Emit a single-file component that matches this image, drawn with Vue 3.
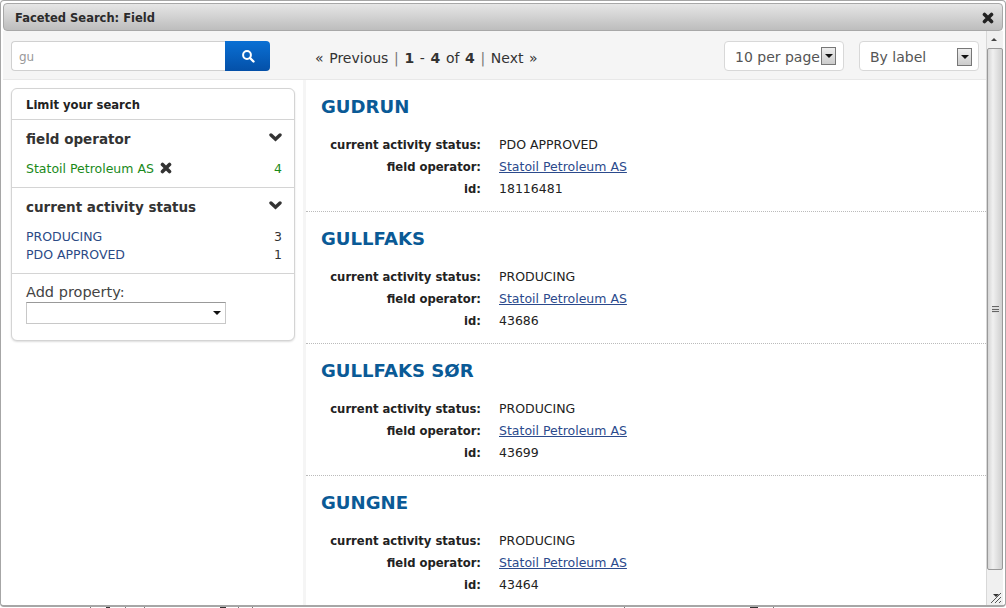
<script setup>
const results = [
  { name: 'GUDRUN', status: 'PDO APPROVED', id: '18116481' },
  { name: 'GULLFAKS', status: 'PRODUCING', id: '43686' },
  { name: 'GULLFAKS SØR', status: 'PRODUCING', id: '43699' },
  { name: 'GUNGNE', status: 'PRODUCING', id: '43464' },
]
</script>

<template>
  <div class="page">
    <div class="win">
      <header class="title">
        <span>Faceted Search: Field</span>
        <svg class="x" width="12" height="12" viewBox="0 0 12 12"><path d="M2.500 2.500l7 7M9.500 2.500l-7 7" fill="none" stroke="#222" stroke-width="3.600" stroke-linecap="round"/></svg>
      </header>
      <div class="body">
        <div class="main">
          <div class="toolbar">
            <div class="search">
              <div class="input">gu</div>
              <button class="go">
                <svg width="14" height="14" viewBox="0 0 14 14"><circle cx="6" cy="6" r="3.900" fill="none" stroke="#fff" stroke-width="2"/><path d="M9 9l3.500 3.500" stroke="#fff" stroke-width="2.400" stroke-linecap="round"/></svg>
              </button>
            </div>
            <div class="pager">« Previous <i>|</i> <b>1</b> - <b>4</b> of <b>4</b> <i>|</i> Next »</div>
            <div class="sel first"><span>10 per page</span><em class="arrow"></em></div>
            <div class="sel"><span>By label</span><em class="arrow"></em></div>
          </div>
          <div class="columns">
            <aside class="side">
              <div class="card">
                <div class="limit">Limit your search</div>
                <section class="facet one">
                  <div class="fhead"><span>field operator</span><svg width="13" height="9" viewBox="0 0 13 9"><path d="M2 2 6.500 6.200 11 2" fill="none" stroke="#333" stroke-width="3.400" stroke-linecap="round"/></svg></div>
                  <div class="row green"><span>Statoil Petroleum AS <svg class="rm" width="12" height="12" viewBox="0 0 12 12"><path d="M2.500 2.500l7 7M9.500 2.500l-7 7" fill="none" stroke="#333" stroke-width="3.600" stroke-linecap="round"/></svg></span><span>4</span></div>
                </section>
                <section class="facet two">
                  <div class="fhead"><span>current activity status</span><svg width="13" height="9" viewBox="0 0 13 9"><path d="M2 2 6.500 6.200 11 2" fill="none" stroke="#333" stroke-width="3.400" stroke-linecap="round"/></svg></div>
                  <div class="row"><span class="link">PRODUCING</span><span>3</span></div>
                  <div class="row"><span class="link">PDO APPROVED</span><span>1</span></div>
                </section>
                <section class="add">
                  <div class="addlabel">Add property:</div>
                  <div class="addsel"><em></em></div>
                </section>
              </div>
            </aside>
            <main class="results">
              <article v-for="r in results" :key="r.name" class="res">
                <h2>{{ r.name }}</h2>
                <dl>
                  <dt>current activity status:</dt><dd>{{ r.status }}</dd>
                  <dt>field operator:</dt><dd><a>Statoil Petroleum AS</a></dd>
                  <dt>id:</dt><dd>{{ r.id }}</dd>
                </dl>
              </article>
            </main>
          </div>
        </div>
        <div class="scroll">
          <div class="up"></div>
          <div class="thumb"><div class="grip"></div></div>
          <div class="resize">
            <svg width="12" height="12" viewBox="0 0 12 12"><path d="M1 11 11 1M5 11l6-6M9 11l2-2" stroke="#555" stroke-width="1" fill="none"/><path d="M3 2h6l-3 3z" fill="#333"/></svg>
          </div>
        </div>
      </div>
    </div>
    <div class="under"></div>
  </div>
</template>

<style>
html, body { margin: 0; background: #fff; overflow: hidden; }
</style>

<style scoped>
.page { width: 1006px; height: 608px; overflow: hidden; font-family: "DejaVu Sans", Verdana, sans-serif; font-size: 12.500px; color: #222; }
.win { box-sizing: border-box; width: 1006px; height: 607px; border: 1px solid #a6a6a6; border-bottom-width: 2px; border-radius: 4px; padding: 2px 2px 0; background: #fff; display: flex; flex-direction: column; }
.under {
  height: 1px;
  background-color: #fff;
  background-repeat: no-repeat;
  background-image: linear-gradient(#777, #777), linear-gradient(#333, #333), linear-gradient(#777, #777), linear-gradient(#777, #777), linear-gradient(#333, #333), linear-gradient(#777, #777), linear-gradient(#777, #777), linear-gradient(#777, #777), linear-gradient(#333, #333), linear-gradient(#777, #777);
  background-size: 1px 1px, 4px 1px, 1px 1px, 1px 1px, 6px 1px, 1px 1px, 1px 1px, 1px 1px, 8px 1px, 1px 1px;
  background-position: 90px 0, 106px 0, 125px 0, 144px 0, 220px 0, 238px 0, 252px 0, 624px 0, 750px 0, 773px 0;
}
.title { height: 28px; flex: none; box-sizing: border-box; border: 1px solid #a8a8a8; border-radius: 4px; background: linear-gradient(#e6e6e6, #bdbdbd); display: flex; align-items: center; justify-content: space-between; padding: 1px 8px 0 11px; font-size: 11.500px; font-weight: bold; color: #2b2b2b; }
.x { display: block; }
.body { flex: 1; min-height: 0; display: flex; }
.main { flex: 1; min-width: 0; display: flex; flex-direction: column; }
.toolbar { height: 49px; flex: none; box-sizing: border-box; background: #f5f5f5; border-bottom: 1px solid #e8e8e8; display: flex; align-items: flex-start; padding: 10px 7px 0 8px; }
.search { display: flex; width: 259px; height: 30px; flex: none; }
.input { flex: 1; box-sizing: border-box; background: #fff; border: 1px solid #d0d0d0; border-right: 0; border-radius: 4px 0 0 4px; padding: 1px 0 0 7px; line-height: 29px; color: #999; font-size: 12px; }
.go { width: 45px; border: 0; padding: 0; background: linear-gradient(#0a70d4, #0450a8); border-radius: 0 4px 4px 0; display: flex; align-items: center; justify-content: center; }
.pager { margin-left: 45px; line-height: 35px; font-size: 14px; word-spacing: 1.200px; color: #333; flex: 1; white-space: nowrap; }
.pager i { font-style: normal; color: #777; }
.pager b { color: #333; }
.sel { box-sizing: border-box; width: 120px; height: 30px; background: #fff; border: 1px solid #d8d8d8; border-radius: 4px; display: flex; align-items: center; justify-content: space-between; padding: 1px 6px 0 10px; font-size: 14px; color: #555; margin-left: 15px; flex: none; position: relative; }
.sel.first { margin-left: 0; }
.arrow { width: 15px; height: 18px; box-sizing: border-box; border: 1px solid #777; background: linear-gradient(#eee, #ccc); position: relative; display: block; }
.arrow::after { content: ""; position: absolute; left: 3px; top: 6px; border: 4px solid transparent; border-top-color: #111; border-bottom: 0; }
.sel.first .arrow { position: absolute; right: 7px; top: 5px; }
.columns { flex: 1; min-height: 0; display: flex; }
.side { flex: none; box-sizing: border-box; padding: 8px 8px 0; border-right: 3px solid #f5f5f5; width: 303px; }
.card { box-sizing: border-box; width: 284px; border: 1px solid #d4d4d4; border-radius: 6px; box-shadow: 0 1px 2px #ddd; background: #fff; }
.limit { height: 31px; box-sizing: border-box; padding: 1px 0 0 14px; line-height: 30px; font-weight: bold; font-size: 11.600px; color: #222; border-bottom: 1px solid #d4d4d4; }
.facet { box-sizing: border-box; padding: 0 12px 0 14px; border-bottom: 1px solid #d4d4d4; }
.facet.one { height: 68px; }
.facet.two { height: 86px; }
.fhead { height: 38px; display: flex; align-items: center; justify-content: space-between; font-size: 13.500px; font-weight: bold; color: #333; }
.fhead svg { margin-top: -3px; }
.row { display: flex; justify-content: space-between; height: 18px; line-height: 18px; color: #333; }
.facet.one .row { margin-top: 1px; height: 20px; line-height: 20px; }
.facet.two .fhead + .row { margin-top: 2px; }
.green { color: #1a8a1a !important; }
.rm { vertical-align: -1px; margin-left: 2px; }
.link { color: #2b4a86; }
.add { padding: 9px 14px 16px; }
.addlabel { font-size: 14.500px; line-height: 19px; color: #444; }
.addsel { width: 200px; height: 22px; box-sizing: border-box; border: 1px solid #c8c8c8; border-top-color: #999; background: #fff; position: relative; }
.addsel em { position: absolute; right: 4px; top: 8px; border: 4px solid transparent; border-top-color: #111; border-bottom: 0; }
.results { flex: 1; min-width: 0; overflow: hidden; }
.res { height: 132px; box-sizing: border-box; border-bottom: 1px dotted #bbb; padding: 1px 0 0 15px; }
.res h2 { margin: 0; font-size: 18.100px; line-height: 52px; height: 52px; font-weight: bold; color: #0a5a96; }
.res dl { margin: 0; padding-top: 1px; display: grid; grid-template-columns: 160px 1fr; column-gap: 18px; grid-auto-rows: 22px; line-height: 22px; }
.res dt { font-weight: bold; font-size: 11.600px; text-align: right; color: #222; white-space: nowrap; }
.res dd { margin: 0; color: #222; }
.res a { color: #2b4a8c; text-decoration: underline; }
.scroll { width: 17px; flex: none; background: #f0f0f0; border-left: 1px solid #d8d8d8; display: flex; flex-direction: column; box-sizing: border-box; position: relative; }
.up { height: 17px; flex: none; position: relative; }
.up::after { content: ""; position: absolute; left: 4px; top: 7px; border: 3.500px solid transparent; border-bottom-color: #444; border-top: 0; }
.thumb { height: 522px; flex: none; box-sizing: border-box; border: 1px solid #999; border-radius: 2px; background: linear-gradient(90deg, #d6d6d6, #f0f0f0 35%, #cfcfcf); display: flex; align-items: center; justify-content: center; }
.grip { width: 7px; height: 7px; background: repeating-linear-gradient(#666 0 1px, #ddd 1px 2.500px); }
.resize { position: absolute; right: 0; bottom: 0; width: 13px; height: 13px; }
.resize svg { display: block; }
</style>
